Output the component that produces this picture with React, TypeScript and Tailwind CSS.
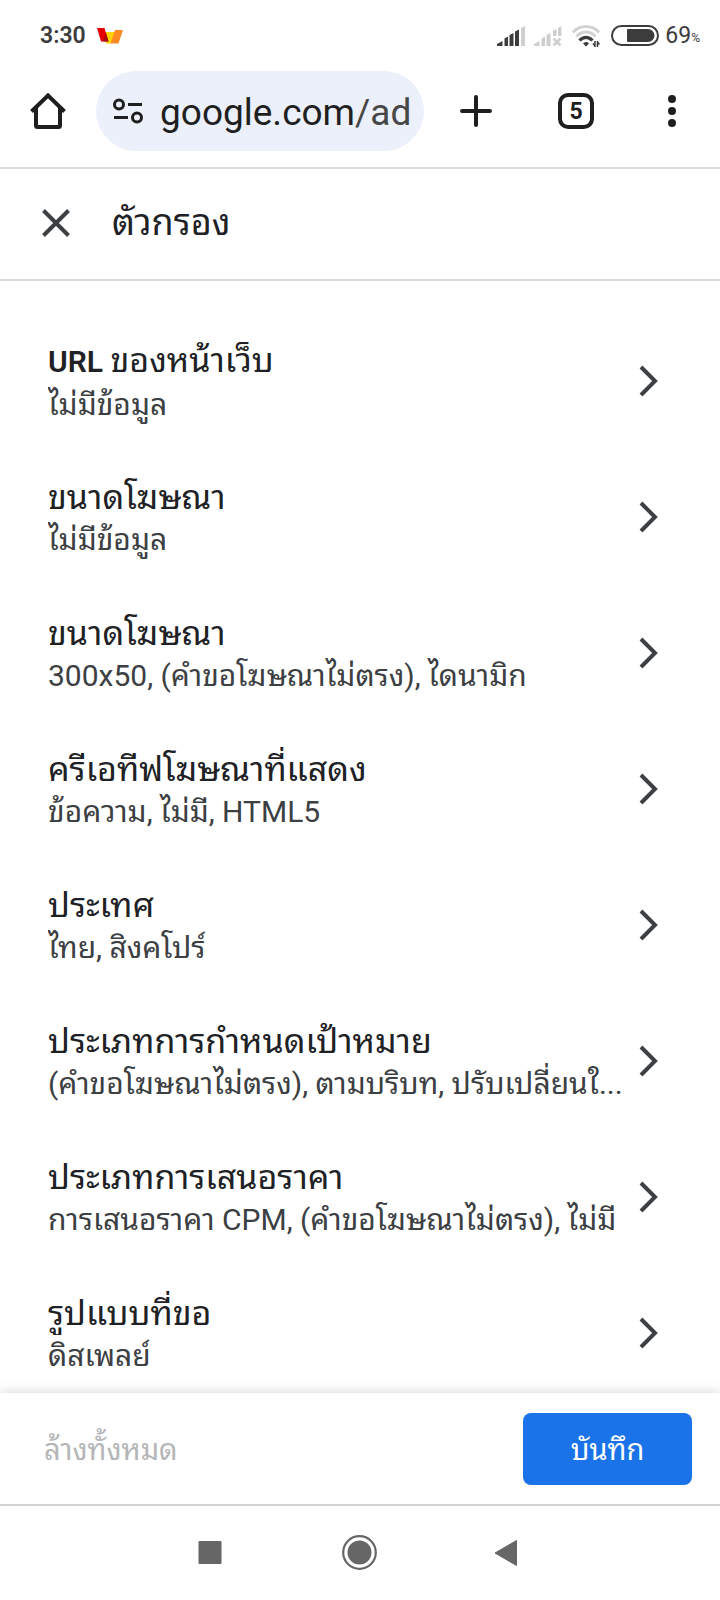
import React from 'react';

const filters = [
  { latin: 'URL', title: 'ของหน้าเว็บ', value: 'ไม่มีข้อมูล' },
  { title: 'ขนาดโฆษณา', value: 'ไม่มีข้อมูล' },
  { title: 'ขนาดโฆษณา', value: '300x50, (คำขอโฆษณาไม่ตรง), ไดนามิก' },
  { title: 'ครีเอทีฟโฆษณาที่แสดง', value: 'ข้อความ, ไม่มี, HTML5' },
  { title: 'ประเทศ', value: 'ไทย, สิงคโปร์' },
  { title: 'ประเภทการกำหนดเป้าหมาย', value: '(คำขอโฆษณาไม่ตรง), ตามบริบท, ปรับเปลี่ยนใ...' },
  { title: 'ประเภทการเสนอราคา', value: 'การเสนอราคา CPM, (คำขอโฆษณาไม่ตรง), ไม่มี' },
  { title: 'รูปแบบที่ขอ', value: 'ดิสเพลย์' },
];

function StatusBar() {
  return (
    <div className="flex h-[71px] shrink-0 items-center pl-10 pr-5 text-[#3c3c3c]">
      <span className="text-[23px] font-semibold leading-7">3:30</span>
      <svg className="ml-[11px] h-4 w-[26px]" viewBox="0 0 26 16">
        <path d="M9 4h9l-4 11.500H9z" fill="#ffd500" />
        <path d="M0 0h7.500l4 13.500H4z" fill="#e60000" />
        <path d="M9 5l2.500 8.500H6z" fill="#a31212" />
        <path d="M18 2h8l-4.500 13.500H13.500z" fill="#ff8a24" />
      </svg>
      <div className="ml-auto flex items-center">
        <svg className="h-5 w-7" viewBox="0 0 28 20">
          <path d="M0 20v-2l5.500-3v5zM7.500 12.500l3.500-2V20H7.500zM12.500 9l4-2v13h-4zM18 5.500l4-2V20h-4z" fill="#3c3c3c" />
          <path d="M24 2l4-2v20h-4z" fill="#cfcfcf" />
        </svg>
        <svg className="ml-[9px] h-5 w-7" viewBox="0 0 28 20" fill="#cfcfcf">
          <path d="M0 20v-2l5.500-3v5zM7.500 12.500l3.500-2V20H7.500zM12.500 9l4-2v13h-4zM19 5l3.500-2v7H19zM24 2l3.500-2v10H24z" />
          <path d="M19.500 12.500l7 7M26.500 12.500l-7 7" stroke="#cfcfcf" strokeWidth="2.600" />
        </svg>
        <svg className="ml-[10px] h-[22px] w-7" viewBox="0 0 28 22" fill="none">
          <path d="M1 7.500C8 -.5 20 -.5 27 7.500" stroke="#d2d2d2" strokeWidth="3" />
          <path d="M4.500 11.500C10 5.500 18 5.500 23.500 11.500" stroke="#d2d2d2" strokeWidth="3" />
          <path d="M7.500 15.500c4-4.300 9-4.300 13 0" stroke="#3c3c3c" strokeWidth="3.200" />
          <path d="M11 18.500c1.800-2 4.200-2 6 0l-3 3z" fill="#3c3c3c" />
          <path d="M23 16v6M25.500 16v6M23 21l-2-2.500M25.500 17l2 2.500" stroke="#3c3c3c" strokeWidth="1.500" />
        </svg>
        <svg className="ml-[11px] h-[21px] w-12" viewBox="0 0 48 21">
          <rect x="1" y="1" width="46" height="19" rx="9.500" fill="none" stroke="#3c3c3c" strokeWidth="2" />
          <path d="M17 4h20a6.500 6.500 0 0 1 0 13H17a1 1 0 0 1-1-1V5a1 1 0 0 1 1-1z" fill="#3c3c3c" />
        </svg>
        <span className="ml-1.5 text-[23px] leading-7">69</span>
        <span className="mt-1 text-xs">%</span>
      </div>
    </div>
  );
}

function BrowserBar() {
  return (
    <div className="flex h-[98px] shrink-0 items-start border-b-2 border-[#dfdfdf] text-[#1f1f1f]">
      <button type="button" aria-label="Home" className="flex h-20 w-24 items-center justify-center">
        <svg className="h-9 w-9" viewBox="0 0 36 36" fill="none" stroke="currentColor" strokeWidth="4">
          <path d="M6 15v17.500a1.500 1.500 0 0 0 1.500 1.500h21a1.500 1.500 0 0 0 1.500-1.500V15" />
          <path d="M1.500 18.500L18 2.500l16.500 16" />
        </svg>
      </button>
      <button type="button" aria-label="google.com/ad" className="flex h-20 min-w-0 flex-1 items-center overflow-hidden rounded-full bg-[#ebf0fa] pl-4">
        <svg className="h-[30px] w-8 shrink-0" viewBox="0 0 32 30" fill="none" stroke="currentColor" strokeWidth="3">
          <circle cx="7" cy="8.500" r="4.500" />
          <path d="M16 8.500h14M2 21.500h14" />
          <circle cx="25" cy="21.500" r="4.500" />
        </svg>
        <span className="ml-4 pt-1 whitespace-nowrap text-[37px] leading-[44px]">
          google.com<span className="text-[#474747]">/ad</span>
        </span>
      </button>
      <button type="button" aria-label="New tab" className="flex h-20 w-[104px] items-center justify-center">
        <svg className="h-8 w-8" viewBox="0 0 32 32" stroke="currentColor" strokeWidth="4" strokeLinecap="round">
          <path d="M16 2v28M2 16h28" />
        </svg>
      </button>
      <button type="button" aria-label="Tabs" className="flex h-20 w-24 items-center justify-center">
        <span className="flex h-9 w-9 items-center justify-center rounded-[10px] border-4 border-[#1f1f1f] text-[23px] font-bold leading-none">5</span>
      </button>
      <button type="button" aria-label="Menu" className="flex h-20 w-24 items-center justify-center">
        <svg className="h-8 w-2" viewBox="0 0 8 32" fill="currentColor">
          <circle cx="4" cy="4" r="4" />
          <circle cx="4" cy="16" r="4" />
          <circle cx="4" cy="28" r="4" />
        </svg>
      </button>
    </div>
  );
}

function FilterRow({ latin, title, value }: { latin?: string; title: string; value: string }) {
  return (
    <li>
      <button type="button" className="flex h-[136px] w-full items-center pl-12 pr-[61px] text-left">
        <span className="flex min-w-0 flex-1 flex-col pt-0.5">
          <span className="truncate text-[34px] leading-[44px] text-[#202124]">
            {latin && <span className="text-[30px] font-semibold">{latin} </span>}
            {title}
          </span>
          <span className="truncate text-[30px] leading-[42px] text-[#3c4043]">{value}</span>
        </span>
        <svg className="ml-2.5 h-8 w-5 shrink-0" viewBox="0 0 20 32" fill="none" stroke="#3c4043" strokeWidth="4">
          <path d="M2 2l14 14L2 30" />
        </svg>
      </button>
    </li>
  );
}

function NavBar() {
  return (
    <nav className="relative flex h-24 shrink-0 items-center justify-center gap-[114px] border-t-2 border-[#d2d2d2] bg-white text-[#666666]">
      <button type="button" aria-label="Recents">
        <svg className="h-9 w-9" viewBox="0 0 36 36" fill="currentColor">
          <rect x="6.500" y="6" width="23" height="23" rx="1" />
        </svg>
      </button>
      <button type="button" aria-label="Home screen">
        <svg className="h-9 w-9" viewBox="0 0 36 36" fill="currentColor">
          <circle cx="17.500" cy="17.500" r="12" />
          <circle cx="17.500" cy="17.500" r="16.300" fill="none" stroke="currentColor" strokeWidth="2.200" />
        </svg>
      </button>
      <button type="button" aria-label="Back">
        <svg className="h-9 w-9" viewBox="0 0 36 36" fill="currentColor" stroke="currentColor" strokeLinejoin="round">
          <path d="M3 18L24.500 5.500v25z" />
        </svg>
      </button>
    </nav>
  );
}

function App() {
  return (
    <div className="flex h-screen flex-col overflow-hidden bg-white font-['Roboto','Noto_Sans_Thai_Looped','Noto_Looped_Thai','Droid_Sans_Thai','Loma','Garuda','Waree','Noto_Sans_Thai',sans-serif]">
      <StatusBar />
      <BrowserBar />
      <header className="flex h-28 shrink-0 items-center border-b-2 border-[#dadce0] pb-0.5 pl-[42px]">
        <button type="button" aria-label="Close">
          <svg className="h-7 w-7" viewBox="0 0 28 28" stroke="#3c4043" strokeWidth="4">
            <path d="M1.500 1.500l25 25M26.500 1.500l-25 25" />
          </svg>
        </button>
        <h1 className="ml-[42px] text-[36px] leading-[48px] text-[#202124]">ตัวกรอง</h1>
      </header>
      <main className="min-h-0 flex-1 overflow-hidden pt-8">
        <ul>
          {filters.map((filter, index) => (
            <FilterRow key={index} {...filter} />
          ))}
        </ul>
      </main>
      <footer className="relative flex h-[111px] shrink-0 items-center justify-between bg-white pl-11 pr-7 shadow-[0_0_12px_rgba(0,0,0,0.18)]">
        <button type="button" disabled className="pt-0.5 text-[29px] leading-[42px] text-[#b5b6b7]">ล้างทั้งหมด</button>
        <button type="button" className="h-[72px] w-[169px] rounded-lg bg-[#1a73e8] pt-0.5 text-[29px] leading-[42px] text-white">บันทึก</button>
      </footer>
      <NavBar />
    </div>
  );
}

export default App;
